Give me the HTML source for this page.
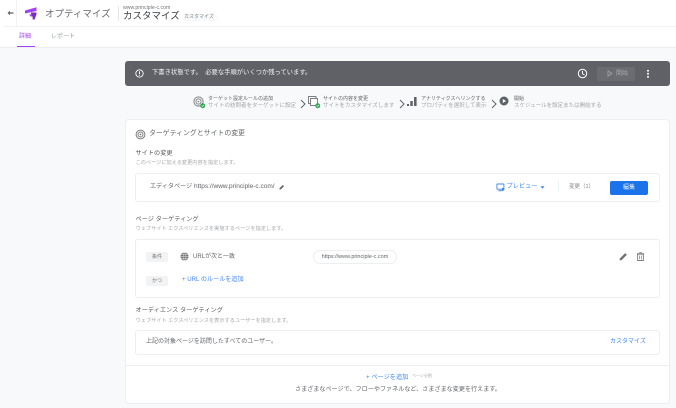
<!DOCTYPE html>
<html lang="ja">
<head>
<meta charset="utf-8">
<title>オプティマイズ</title>
<style>
html,body{margin:0;padding:0;background:#fff}
body{width:676px;height:408px;overflow:hidden;position:relative;font-family:"Liberation Sans","Noto Sans CJK JP",sans-serif;color:#5f6368}
#w{position:absolute;left:0;top:0;width:676px;height:408px;overflow:hidden;background:#f8f9fa;filter:blur(.35px)}
.a{position:absolute;white-space:nowrap;line-height:1}
.b{position:absolute;box-sizing:border-box;background:#fff;border:1px solid #eceef0;border-radius:3px}
svg{position:absolute;display:block}
.blue{color:#4285f4}
.s{font-size:5.2px;color:#a6a9ad}
.h{font-size:6.2px;color:#55585c}
.st1{font-size:5px;color:#5f6368}
.st2{font-size:5.5px;color:#a3a6aa}
.chip{position:absolute;width:22px;height:10px;background:#f1f3f4;border-radius:2px;font-size:5px;line-height:10px;text-align:center;color:#70757a}
</style>
</head>
<body>
<div id="w">
  <!-- header -->
  <div class="a" style="left:0;top:0;width:676px;height:47px;background:#fff;border-bottom:1px solid #eceef0"></div>
  <div class="a" style="left:4px;top:26px;width:672px;height:1px;background:#f0f1f2"></div>
  <svg style="left:7px;top:10px" width="7" height="6" viewBox="0 0 7 6"><path d="M0.5 3L3 .8V2.4H6.5V3.6H3V5.2Z" fill="#5f6368"/></svg>
  <div class="a" style="left:16px;top:0;width:1px;height:26px;background:#f1f2f3"></div>
  <svg style="left:25px;top:7px" width="12" height="13" viewBox="0 0 12 13"><path d="M0 3.5L11.5 .3V4L0 6.5Z" fill="#a142f4"/><path d="M6 5.5H11.5V7.5L9.5 12.5H7.6V9.5H6Z" fill="#7b2cbf"/><path d="M4 7.5H7V9.5H5.5Z" fill="#a142f4"/></svg>
  <div class="a" style="left:45px;top:9.7px;font-size:9.5px;color:#6a6e73">オプティマイズ</div>
  <div class="a" style="left:118px;top:6px;width:1px;height:15px;background:#e4e6e8"></div>
  <div class="a" style="left:123px;top:5.5px;font-size:5.2px;color:#70757a">www.principle-c.com</div>
  <div class="a" style="left:123px;top:12.3px;font-size:9.5px;color:#3c4043">カスタマイズ</div>
  <div class="a" style="left:184px;top:14px;width:33px;height:7px;font-size:5px;line-height:7px;color:#80868b;background:#f8f9fa">カスタマイズ</div>

  <!-- tabs -->
  <div class="a" style="left:19px;top:33.5px;font-size:6px;color:#a142f4">詳細</div>
  <div class="a" style="left:51px;top:33.5px;font-size:6px;color:#9aa0a6">レポート</div>
  <div class="a" style="left:17px;top:45.5px;width:17.5px;height:1.5px;background:#a142f4"></div>

  <!-- draft bar -->
  <div class="a" style="left:125px;top:61px;width:545px;height:25px;background:#5f6166;border-radius:3px"></div>
  <svg style="left:135px;top:69px" width="9" height="9" viewBox="0 0 9 9"><circle cx="4.5" cy="4.5" r="3.7" fill="none" stroke="#fff" stroke-width=".9"/><path d="M4.5 2.2V5.2M4.5 5.9V6.8" stroke="#fff" stroke-width=".9"/></svg>
  <div class="a" style="left:152px;top:70px;font-size:6.3px;color:#f1f3f4">下書き状態です。<span style="margin-left:3.5px">必要な手順がいくつか残っています。</span></div>
  <svg style="left:577px;top:68px" width="11" height="11" viewBox="0 0 11 11"><circle cx="5.5" cy="5.5" r="4.2" fill="none" stroke="#fff" stroke-width="1"/><path d="M5.5 2.8V5.7L7.5 7" fill="none" stroke="#fff" stroke-width=".9"/></svg>
  <div class="a" style="left:597px;top:66.5px;width:38px;height:14px;background:#6a6c71;border-radius:2px"></div>
  <svg style="left:607px;top:70px" width="6" height="7" viewBox="0 0 6 7"><path d="M1 1L5 3.5L1 6Z" fill="none" stroke="#a0a3a7" stroke-width=".8"/></svg>
  <div class="a" style="left:616px;top:70.5px;font-size:6px;color:#a8abaf">開始</div>
  <svg style="left:646px;top:69px" width="4" height="10" viewBox="0 0 4 10"><circle cx="2" cy="1.7" r="1" fill="#fff"/><circle cx="2" cy="4.8" r="1" fill="#fff"/><circle cx="2" cy="7.9" r="1" fill="#fff"/></svg>

  <!-- stepper -->
  <svg style="left:193px;top:96px" width="13" height="13" viewBox="0 0 13 13"><circle cx="5.5" cy="5.5" r="4.6" fill="none" stroke="#8a8d91" stroke-width="1.1"/><circle cx="5.5" cy="5.5" r="2.6" fill="none" stroke="#8a8d91" stroke-width="1"/><circle cx="5.5" cy="5.5" r=".9" fill="#8a8d91"/><circle cx="9.7" cy="9.7" r="2.5" fill="#34a853"/><path d="M8.6 9.7L9.4 10.5L10.9 9" fill="none" stroke="#fff" stroke-width=".6"/></svg>
  <div class="a st1" style="left:208px;top:96.5px">ターゲット設定ルールの追加</div>
  <div class="a st2" style="left:208px;top:103.5px">サイトの訪問者をターゲットに設定</div>
  <svg style="left:300px;top:99px" width="6" height="10" viewBox="0 0 6 10"><path d="M1 1L5 5L1 9" fill="none" stroke="#5f6368" stroke-width="1"/></svg>
  <svg style="left:308px;top:96px" width="13" height="13" viewBox="0 0 13 13"><rect x=".5" y=".5" width="7.5" height="7" fill="none" stroke="#5f6368" stroke-width=".8"/><rect x="2.5" y="2.5" width="7" height="7" fill="#fff" stroke="#5f6368" stroke-width=".8"/><circle cx="9.7" cy="9.7" r="2.5" fill="#34a853"/><path d="M8.6 9.7L9.4 10.5L10.9 9" fill="none" stroke="#fff" stroke-width=".6"/></svg>
  <div class="a st1" style="left:323px;top:96.5px">サイトの内容を変更</div>
  <div class="a st2" style="left:323px;top:103.5px">サイトをカスタマイズします</div>
  <svg style="left:399px;top:99px" width="6" height="10" viewBox="0 0 6 10"><path d="M1 1L5 5L1 9" fill="none" stroke="#5f6368" stroke-width="1"/></svg>
  <svg style="left:407px;top:96px" width="10" height="11" viewBox="0 0 10 11"><rect x="0" y="8" width="2" height="2" fill="#5f6368"/><rect x="3.3" y="5" width="2.5" height="5" fill="#5f6368"/><rect x="7" y="1" width="2.6" height="9" fill="#5f6368"/></svg>
  <div class="a st1" style="left:421px;top:96.5px">アナリティクスへリンクする</div>
  <div class="a st2" style="left:421px;top:103.5px">プロパティを選択して表示</div>
  <svg style="left:491px;top:99px" width="6" height="10" viewBox="0 0 6 10"><path d="M1 1L5 5L1 9" fill="none" stroke="#5f6368" stroke-width="1"/></svg>
  <svg style="left:499px;top:96px" width="10" height="10" viewBox="0 0 10 10"><circle cx="5" cy="5" r="4.5" fill="#5f6368"/><path d="M3.8 3L7 5L3.8 7Z" fill="#fff"/></svg>
  <div class="a st1" style="left:514px;top:96.5px">開始</div>
  <div class="a st2" style="left:514px;top:103.5px">スケジュールを設定または開始する</div>

  <!-- main card -->
  <div class="b" style="left:125px;top:119px;width:545px;height:285px;border-radius:4px"></div>
  <svg style="left:135px;top:129px" width="11" height="11" viewBox="0 0 11 11"><circle cx="5.5" cy="5.5" r="4.4" fill="none" stroke="#7b7e82" stroke-width="1"/><circle cx="5.5" cy="5.5" r="2.5" fill="none" stroke="#7b7e82" stroke-width="1"/><circle cx="5.5" cy="5.5" r=".9" fill="#7b7e82"/></svg>
  <div class="a" style="left:149px;top:130.5px;font-size:6.9px;color:#5f6368">ターゲティングとサイトの変更</div>

  <div class="a h" style="left:135.5px;top:151px">サイトの変更</div>
  <div class="a s" style="left:135.5px;top:161px">このページに加える変更内容を指定します。</div>
  <div class="b" style="left:135px;top:173px;width:525px;height:29px"></div>
  <div class="a" style="left:150px;top:184px;font-size:6.1px;color:#5f6368">エディタページ</div>
  <div class="a" style="left:194px;top:184px;font-size:6.5px;color:#5f6368">https://www.principle-c.com/</div>
  <svg style="left:279px;top:184px" width="6" height="6" viewBox="0 0 6 6"><path d="M.5 5.5V4.3L3.8 1L5 2.2L1.7 5.5Z" fill="#5f6368"/></svg>
  <svg style="left:496px;top:183px" width="9" height="9" viewBox="0 0 9 9"><rect x=".9" y="1" width="7" height="5.2" rx=".5" fill="none" stroke="#4285f4" stroke-width=".9"/><path d="M2.5 7.7H6.5" stroke="#4285f4" stroke-width="1"/><rect x="6" y="5" width="2.2" height="2.6" fill="#4285f4"/></svg>
  <div class="a blue" style="left:506.5px;top:184px;font-size:6.2px">プレビュー</div>
  <svg style="left:540px;top:186px" width="5" height="3" viewBox="0 0 5 3"><path d="M.5 .3H4.5L2.5 2.7Z" fill="#4285f4"/></svg>
  <div class="a" style="left:558px;top:181px;width:1px;height:10px;background:#eceef0"></div>
  <div class="a" style="left:569px;top:184.5px;font-size:5.5px;color:#80868b">変更（1）</div>
  <div class="a" style="left:610px;top:180.5px;width:38px;height:14px;background:#1a73e8;border-radius:2px;color:#e8f0fe;font-size:6px;line-height:14px;text-align:center">編集</div>

  <div class="a h" style="left:135.5px;top:216.5px">ページ ターゲティング</div>
  <div class="a s" style="left:135.5px;top:226.5px">ウェブサイト エクスペリエンスを実施するページを指定します。</div>
  <div class="b" style="left:135px;top:239px;width:525px;height:59px"></div>
  <div class="chip" style="left:146px;top:252px">条件</div>
  <svg style="left:180px;top:251.5px" width="9" height="9" viewBox="0 0 9 9"><circle cx="4.5" cy="4.5" r="4" fill="#70757a"/><path d="M.5 4.5H8.5M1.2 2.5H7.8M1.2 6.5H7.8M4.5 .5C2.5 3 2.5 6 4.5 8.5C6.5 6 6.5 3 4.5 .5Z" fill="none" stroke="#fff" stroke-width=".4"/></svg>
  <div class="a" style="left:193px;top:253.5px;font-size:6px;color:#5f6368">URLが次と一致</div>
  <div class="a" style="left:313px;top:249.5px;width:84px;height:14px;box-sizing:border-box;border:1px solid #eceef0;border-radius:7px;background:#fff;font-size:5.5px;line-height:12px;text-align:center;color:#5f6368">https://www.principle-c.com</div>
  <svg style="left:619px;top:252px" width="9" height="9" viewBox="0 0 9 9"><path d="M.7 8.3V6.6L6.2 1.1L7.9 2.8L2.4 8.3Z" fill="#6d7175"/></svg>
  <svg style="left:636px;top:252px" width="9" height="9" viewBox="0 0 9 9"><path d="M1.6 2.2H7.4V8.5H1.6Z" fill="none" stroke="#7b7e82" stroke-width=".9"/><path d="M1 1.3H8M3.2 .6H5.8M3.5 3.5V7.3M5.5 3.5V7.3" stroke="#7b7e82" stroke-width=".7"/></svg>
  <div class="chip" style="left:146px;top:275.5px">かつ</div>
  <div class="a blue" style="left:182px;top:277px;font-size:6.1px">+ URL のルールを追加</div>

  <div class="a h" style="left:135.5px;top:308px">オーディエンス ターゲティング</div>
  <div class="a s" style="left:135.5px;top:318.5px">ウェブサイト エクスペリエンスを表示するユーザーを指定します。</div>
  <div class="b" style="left:135px;top:330px;width:525px;height:25px"></div>
  <div class="a" style="left:146px;top:339px;font-size:6px;color:#5f6368">上記の対象ページを訪問したすべてのユーザー。</div>
  <div class="a blue" style="left:610px;top:339px;font-size:6px">カスタマイズ</div>

  <div class="a" style="left:126px;top:365px;width:543px;height:1px;background:#eceef0"></div>
  <div class="a blue" style="left:366px;top:375px;font-size:6.2px">+ ページを追加</div>
  <div class="a" style="left:412px;top:374px;font-size:4px;color:#a6a9ad">ページ分割</div>
  <div class="a" style="left:295px;top:386.5px;font-size:6.1px;color:#5f6368">さまざまなページで、フローやファネルなど、さまざまな変更を行えます。</div>
</div>
</body>
</html>
